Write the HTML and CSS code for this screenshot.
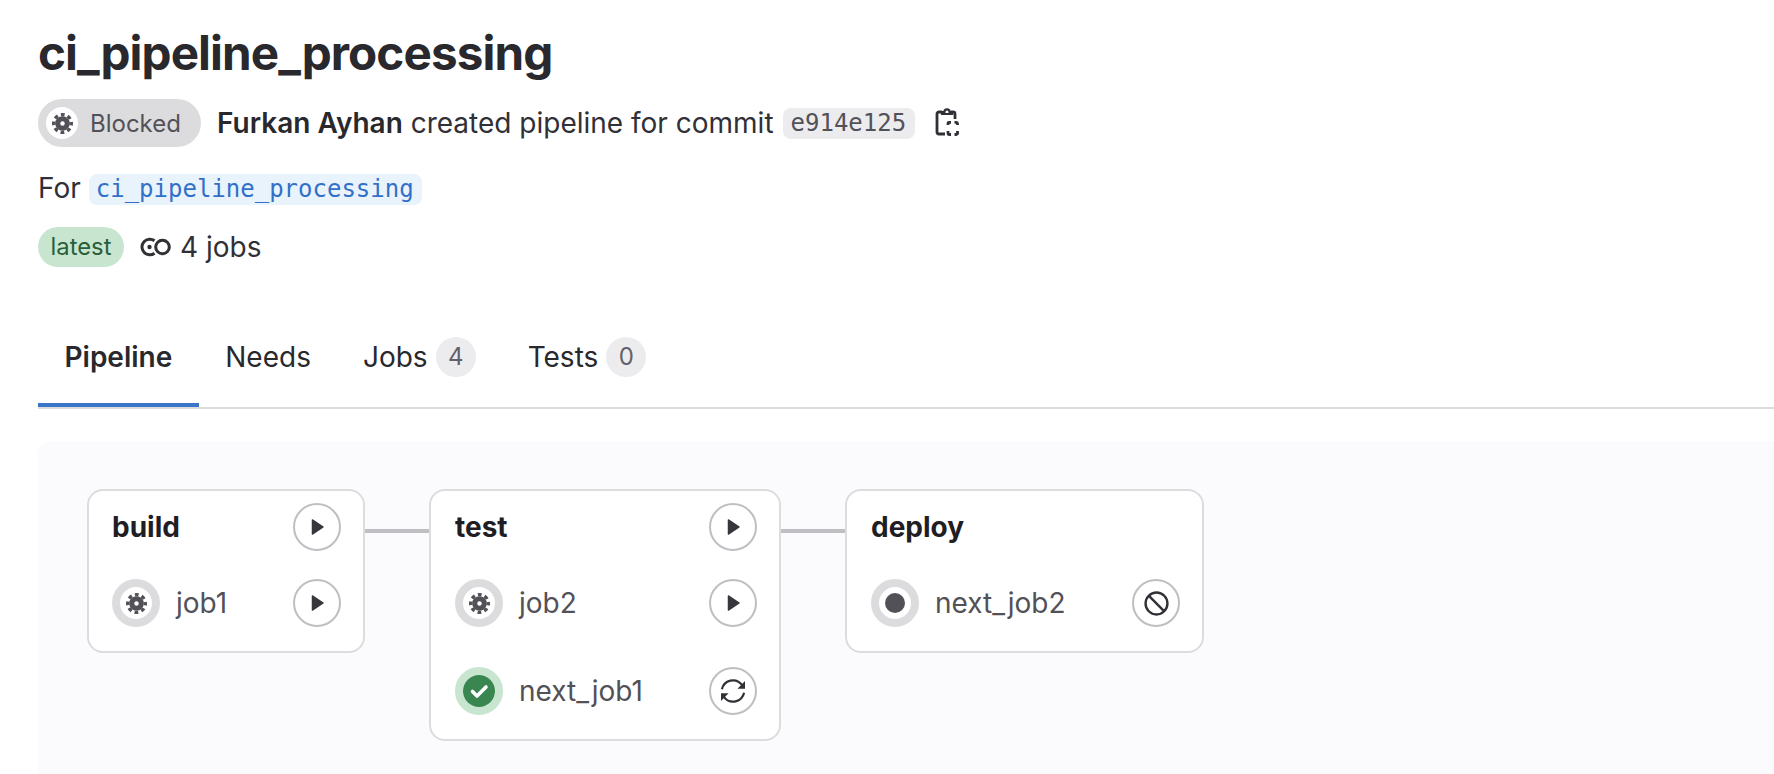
FILE: index.html
```html
<!DOCTYPE html>
<html>
<head>
  <title>ci_pipeline_processing</title>
  <link rel="stylesheet" href="styles.css">
</head>
<body>
  <svg class="defs" width="0" height="0">
    <symbol id="gear" viewBox="0 0 14 14">
      <circle cx="7" cy="7" r="3.2" fill="none" stroke="currentColor" stroke-width="3.4"/>
      <circle cx="7" cy="7" r="5.9" fill="none" stroke="currentColor" stroke-width="2.2" stroke-dasharray="2.5 2.133" stroke-dashoffset="1.25"/>
    </symbol>
    <symbol id="play" viewBox="0 0 16 16">
      <path d="M3.800 2.200v11.600c0 .4.400.6.800.4l8.600-5.800c.3-.2.3-.6 0-.8l-8.600-5.800c-.4-.2-.8 0-.8.400z" fill="currentColor"/>
    </symbol>
  </svg>

  <h1 class="title">ci_pipeline_processing</h1>

  <div class="info-row">
    <span class="status-pill">
      <span class="status-pill-icon"><svg class="gear-sm"><use href="#gear"/></svg></span>
      Blocked
    </span>
    <span class="info-text"><strong>Furkan Ayhan</strong> created pipeline for commit</span>
    <code class="chip">e914e125</code>
    <svg class="copy-icon" viewBox="0 0 24 32" fill="none" stroke="#303036" stroke-width="2.800">
      <path d="M10 27H4a2 2 0 0 1-2-2V7a2 2 0 0 1 2-2h3"/>
      <path d="M16 5h2a2 2 0 0 1 2 2v5"/>
      <path d="M7 7V5h2.400a2.600 2.600 0 0 1 5.200 0H17v2z" stroke-width="2.200"/>
      <path d="M13 18v-1.700a1 1 0 0 1 1-1h2M19.500 15.300H21a1.500 1.500 0 0 1 1.500 1.500V18M22.500 24v1.500A1.500 1.500 0 0 1 21 27.500h-1.500M16 27.500h-2a1 1 0 0 1-1-1V24"/>
    </svg>
  </div>

  <div class="ref-row">
    <span class="info-text">For</span>
    <code class="chip chip-link">ci_pipeline_processing</code>
  </div>

  <div class="meta-row">
    <span class="tag-latest">latest</span>
    <svg class="jobs-icon" viewBox="0 0 32 20" fill="none" stroke="#303036" stroke-width="3">
      <path d="M14.500 3.800A7.800 7.800 0 1 0 14.500 16.200"/>
      <circle cx="9.500" cy="10" r="2.200" fill="#303036" stroke="none"/>
      <circle cx="22.500" cy="10" r="6.800"/>
    </svg>
    <span class="info-text">4 jobs</span>
  </div>

  <nav class="tabs">
    <a class="tab tab-active">Pipeline</a>
    <a class="tab">Needs</a>
    <a class="tab">Jobs <span class="count">4</span></a>
    <a class="tab">Tests <span class="count">0</span></a>
  </nav>

  <main class="graph">
    <section class="stage stage-build">
      <div class="job-row stage-head">
        <span class="stage-name">build</span>
        <button class="action"><svg class="play"><use href="#play"/></svg></button>
      </div>
      <div class="job-row">
        <span class="status"><svg class="gear"><use href="#gear"/></svg></span>
        <span class="job-name">job1</span>
        <button class="action"><svg class="play"><use href="#play"/></svg></button>
      </div>
    </section>

    <div class="link"></div>

    <section class="stage stage-test">
      <div class="job-row stage-head">
        <span class="stage-name">test</span>
        <button class="action"><svg class="play"><use href="#play"/></svg></button>
      </div>
      <div class="job-row">
        <span class="status"><svg class="gear"><use href="#gear"/></svg></span>
        <span class="job-name">job2</span>
        <button class="action"><svg class="play"><use href="#play"/></svg></button>
      </div>
      <div class="job-row">
        <span class="status status-success">
          <svg class="check" viewBox="0 0 32 32"><circle cx="16" cy="16" r="16" fill="#3a8650"/><path d="M9.500 16.500l4.500 4.500 9-9" fill="none" stroke="#fff" stroke-width="3.600" stroke-linecap="round" stroke-linejoin="round"/></svg>
        </span>
        <span class="job-name">next_job1</span>
        <button class="action">
          <svg class="retry" viewBox="0 0 24 24" fill="none" stroke="#303036" stroke-width="1.900">
            <path d="M2.500 10.500A9.700 9.700 0 0 1 19.500 6.500L21.500 9"/>
            <path d="M22.300 3.500v6.500h-6.500" fill="#303036" stroke="none"/>
            <path d="M21.500 13.500A9.700 9.700 0 0 1 4.500 17.500L2.500 15"/>
            <path d="M1.700 20.500V14h6.500" fill="#303036" stroke="none"/>
          </svg>
        </button>
      </div>
    </section>

    <div class="link"></div>

    <section class="stage stage-deploy">
      <div class="job-row stage-head">
        <span class="stage-name">deploy</span>
      </div>
      <div class="job-row">
        <span class="status"><span class="dot"></span></span>
        <span class="job-name">next_job2</span>
        <button class="action">
          <svg class="cancel" viewBox="0 0 24 24" fill="none" stroke="#303036" stroke-width="2.300">
            <circle cx="12" cy="12" r="10.500"/>
            <path d="M5 5l14 14"/>
          </svg>
        </button>
      </div>
    </section>
  </main>
</body>
</html>
```

FILE: styles.css
```css
html, body {
  height: 100%;
  margin: 0;
  overflow: hidden;
}
body {
  display: flex;
  flex-direction: column;
  padding-left: 38px;
  background-color: #ffffff;
  color: #303036;
  font-family: Inter, "Liberation Sans", sans-serif;
  font-size: 28px;
}
.defs {
  position: absolute;
}
.title {
  margin: 26px 0 19px;
  font-size: 47.6px;
  line-height: 54px;
  font-weight: 700;
  letter-spacing: -0.9px;
  color: #28282d;
}

/* header rows */
.info-row, .ref-row, .meta-row {
  display: flex;
  align-items: center;
}
.info-row {
  height: 48px;
}
.ref-row {
  height: 36px;
  margin-top: 24px;
}
.ref-row .info-text {
  margin-bottom: 3px;
}
.meta-row {
  height: 40px;
  margin-top: 20px;
}
.info-text strong {
  font-weight: 600;
  color: #28282d;
}
.status-pill {
  display: flex;
  align-items: center;
  gap: 12px;
  width: 163px;
  height: 48px;
  box-sizing: border-box;
  padding-left: 8px;
  margin-right: 16px;
  border-radius: 24px;
  background-color: #dcdcde;
  color: #535158;
  font-size: 24px;
}
.status-pill-icon {
  display: flex;
  align-items: center;
  justify-content: center;
  width: 32px;
  height: 32px;
  border-radius: 50%;
  background-color: #ffffff;
}
.gear-sm {
  width: 21px;
  height: 21px;
  color: #535158;
}
.chip {
  padding: 1px 9px 1px 8px;
  border-radius: 8px;
  background-color: #ececef;
  color: #535158;
  font-family: "DejaVu Sans Mono", "Liberation Mono", monospace;
  font-size: 24px;
  line-height: 29px;
}
.info-row .chip {
  margin-left: 9px;
}
.chip-link {
  margin-left: 8px;
  padding: 1px 8px 1px 7px;
  background-color: #e9f3fc;
  color: #3270c8;
}
.copy-icon {
  width: 24px;
  height: 32px;
  margin-left: 20px;
}
.tag-latest {
  width: 86px;
  height: 40px;
  margin-right: 16px;
  border-radius: 20px;
  background-color: #c8e5cf;
  color: #2a5f3a;
  font-size: 23.8px;
  line-height: 39px;
  text-align: center;
}
.jobs-icon {
  width: 32px;
  height: 20px;
  margin-right: 8px;
}

/* tabs */
.tabs {
  display: flex;
  margin-top: 40px;
  border-bottom: 2px solid #dcdcde;
}
.tab {
  display: flex;
  align-items: center;
  gap: 8px;
  height: 100px;
  padding: 0 26px;
  box-sizing: border-box;
  color: #28282d;
}
.tab-active {
  border-bottom: 4px solid #3b74c9;
  padding: 4px 27px 0 26.5px;
  font-weight: 600;
}
.count {
  width: 40px;
  height: 40px;
  border-radius: 50%;
  background-color: #ececef;
  color: #626168;
  font-size: 24px;
  line-height: 40px;
  text-align: center;
}

/* pipeline graph */
.graph {
  flex: 1;
  display: flex;
  align-items: flex-start;
  margin-top: 32px;
  padding: 48px 0 0 49px;
  border-radius: 14px 0 0 0;
  background-color: #fbfafd;
}
.stage {
  display: flex;
  flex-direction: column;
  gap: 28px;
  box-sizing: border-box;
  padding: 12px 22px 24px 24px;
  border: 2px solid #dcdcde;
  border-radius: 16px;
  background-color: #ffffff;
}
.stage-build { width: 278px; padding-left: 23px; }
.stage-test { width: 352px; gap: 40px; }
.stage-test .stage-head { margin-bottom: -12px; }
.stage-deploy { width: 359px; }
.job-row {
  display: flex;
  align-items: center;
  min-height: 48px;
}
.stage-name {
  flex: 1;
  font-size: 28px;
  font-weight: 700;
  color: #1f1e24;
}
.job-name {
  flex: 1;
  margin-left: 16px;
  font-size: 28px;
  color: #535158;
}
.status {
  display: flex;
  align-items: center;
  justify-content: center;
  width: 48px;
  height: 48px;
  box-sizing: border-box;
  border: 8px solid #dcdcde;
  border-radius: 50%;
  background-color: #ffffff;
}
.status-success {
  border-color: #c8e5cf;
}
.gear {
  width: 21px;
  height: 21px;
  color: #535158;
}
.check {
  width: 32px;
  height: 32px;
  flex: none;
}
.dot {
  width: 20px;
  height: 20px;
  border-radius: 50%;
  background-color: #535158;
}
.action {
  display: flex;
  align-items: center;
  justify-content: center;
  width: 48px;
  height: 48px;
  padding: 0;
  border: 2px solid #bfbfc3;
  border-radius: 50%;
  background-color: #ffffff;
}
.play {
  width: 20px;
  height: 20px;
  color: #37363c;
}
.retry {
  width: 28px;
  height: 28px;
}
.cancel {
  width: 25px;
  height: 25px;
}
.link {
  flex: none;
  width: 64px;
  height: 4px;
  margin-top: 40px;
  background-color: #bfbfc3;
}
```
